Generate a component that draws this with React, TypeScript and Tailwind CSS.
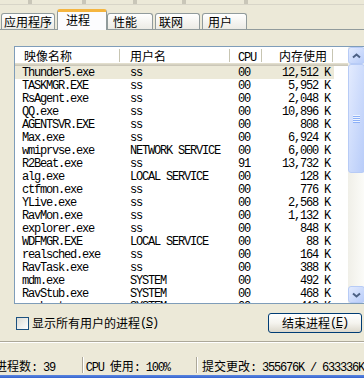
import React from 'react';

const cjk = "font-['Noto_Sans_CJK_SC',sans-serif] text-[12px]";
const mono = "font-['Liberation_Mono',monospace] text-[12px] tracking-[-1.2px]";

// splits a label into CJK and latin runs so each gets its own font
function Txt({ s }: { s: string }) {
  const parts = s.match(/[\u3000-\u9fff\uff00-\uffef]+|[^\u3000-\u9fff\uff00-\uffef]+/g) || [];
  return (
    <>
      {parts.map((p, i) =>
        /[\u3000-\u9fff\uff00-\uffef]/.test(p) ? (
          <span key={i} className={cjk}>{p}</span>
        ) : (
          <span key={i} className={mono}>{p}</span>
        )
      )}
    </>
  );
}

const rows: [string, string, string, string][] = [
  ['Thunder5.exe', 'ss', '00', '12,512 K'],
  ['TASKMGR.EXE', 'ss', '00', '5,952 K'],
  ['RsAgent.exe', 'ss', '00', '2,048 K'],
  ['QQ.exe', 'ss', '00', '10,896 K'],
  ['AGENTSVR.EXE', 'ss', '00', '808 K'],
  ['Max.exe', 'ss', '00', '6,924 K'],
  ['wmiprvse.exe', 'NETWORK SERVICE', '00', '6,000 K'],
  ['R2Beat.exe', 'ss', '91', '13,732 K'],
  ['alg.exe', 'LOCAL SERVICE', '00', '128 K'],
  ['ctfmon.exe', 'ss', '00', '776 K'],
  ['YLive.exe', 'ss', '00', '2,568 K'],
  ['RavMon.exe', 'ss', '00', '1,132 K'],
  ['explorer.exe', 'ss', '00', '848 K'],
  ['WDFMGR.EXE', 'LOCAL SERVICE', '00', '88 K'],
  ['realsched.exe', 'ss', '00', '164 K'],
  ['RavTask.exe', 'ss', '00', '388 K'],
  ['mdm.exe', 'SYSTEM', '00', '492 K'],
  ['RavStub.exe', 'SYSTEM', '00', '468 K'],
  ['svchost.exe', 'SYSTEM', '00', '412 K'],
];

function Divider() {
  return <div className="w-[2px] h-[13px] border-l border-[#c7c5b2] border-r border-r-white" />;
}

function Arrow({ down }: { down?: boolean }) {
  return (
    <svg width="9" height="6" viewBox="0 0 9 6">
      <path d={down ? 'M1 1.5 L4.5 4.5 L8 1.5' : 'M1 4.5 L4.5 1.5 L8 4.5'} fill="none" stroke="#4d6185" strokeWidth="2" />
    </svg>
  );
}

const scrollPart =
  'rounded-[3px] border border-[#b7cbf6] bg-gradient-to-br from-[#e3ebfe] to-[#b8ccf9] flex items-center justify-center';

export default function App() {
  return (
    <div className="w-[364px] h-[378px] overflow-hidden bg-[#ece9d8] flex flex-col text-black leading-none whitespace-pre">
      {/* leftovers of the bar above */}
      <div className="h-[9px] flex flex-col">
        <div className="h-[4px] flex">
          <div className="ml-[28px] w-[4px] bg-[#c9c6b8]" />
          <div className="ml-[50px] w-[4px] bg-[#c9c6b8]" />
          <div className="ml-[47px] w-[4px] bg-[#c9c6b8]" />
          <div className="ml-[45px] w-[4px] bg-[#c9c6b8]" />
          <div className="ml-[58px] w-[4px] bg-[#c9c6b8]" />
        </div>
        <div className="h-[1px] bg-[#d8d5c8]" />
      </div>

      {/* tabs */}
      <div className="h-[21px] flex items-end border-b border-[#919b9c]">
        <div className="ml-[1px] w-[54px] h-[16px] pl-[2px] flex items-center rounded-t-[3px] border border-b-0 border-[#919b9c] bg-gradient-to-b from-white to-[#ecebe5]">
          <Txt s="应用程序" />
        </div>
        <div className="ml-[2px] w-[50px] h-[21px] -mb-[1px] pl-[8px] pb-[2px] flex items-center rounded-t-[3px] border-x border-[#919b9c] border-t-[3px] border-t-[#f5b53f] bg-[#fcfcfe]">
          <Txt s="进程" />
        </div>
        <div className="w-[46px] h-[16px] pl-[5px] flex items-center rounded-t-[3px] border border-b-0 border-[#919b9c] bg-gradient-to-b from-white to-[#ecebe5]">
          <Txt s="性能" />
        </div>
        <div className="ml-[2px] w-[45px] h-[16px] pl-[3px] flex items-center rounded-t-[3px] border border-b-0 border-[#919b9c] bg-gradient-to-b from-white to-[#ecebe5]">
          <Txt s="联网" />
        </div>
        <div className="ml-[2px] w-[45px] h-[16px] pl-[5px] flex items-center rounded-t-[3px] border border-b-0 border-[#919b9c] bg-gradient-to-b from-white to-[#ecebe5]">
          <Txt s="用户" />
        </div>
      </div>

      {/* process list */}
      <div className="ml-[14px] mt-[16px] w-[352px] h-[258px] shrink-0 border border-[#7f9db9] bg-white flex overflow-hidden">
        <div className="w-[333px] flex flex-col overflow-hidden">
          <div className="h-[19px] shrink-0 flex pb-[3px] bg-white shadow-[inset_0_-1px_#cbc7b8,inset_0_-2px_#d6d2c2,inset_0_-3px_#e2decd]">
            <div className="w-[106px] flex items-center">
              <div className="flex-1 pl-[9px]"><Txt s="映像名称" /></div>
              <Divider />
            </div>
            <div className="w-[110px] flex items-center">
              <div className="flex-1 pl-[9px]"><Txt s="用户名" /></div>
              <Divider />
            </div>
            <div className="w-[32px] flex items-center">
              <div className="flex-1 pl-[7px]"><Txt s="CPU" /></div>
              <Divider />
            </div>
            <div className="w-[71px] flex items-center">
              <div className="flex-1 text-right pr-[5px]"><Txt s="内存使用" /></div>
              <Divider />
            </div>
          </div>

          {rows.map((r, i) => (
            <div key={i} className="h-[13px] shrink-0 flex">
              <div className={`w-[319px] flex items-center ${i === 0 ? 'bg-[#ece9d8]' : ''}`}>
                <div className={`w-[106px] pl-[7px] ${mono}`}>{r[0]}</div>
                <div className={`w-[110px] pl-[9px] ${mono}`}>{r[1]}</div>
                <div className={`w-[32px] pl-[7px] ${mono}`}>{r[2]}</div>
                <div className={`w-[71px] pr-[4px] text-right ${mono}`}>{r[3]}</div>
              </div>
            </div>
          ))}
        </div>

        {/* scrollbar */}
        <div className="w-[17px] flex flex-col bg-gradient-to-r from-[#f0efe8] to-[#fcfcf9]">
          <div className={`h-[17px] ${scrollPart}`}>
            <Arrow />
          </div>
          <div className={`h-[109px] flex-col gap-[1px] ${scrollPart}`}>
            {[0, 1, 2, 3].map(k => (
              <div key={k} className="w-[7px] h-[1px] bg-[#eef4fe] shadow-[0_1px_#8cb0f8]" />
            ))}
          </div>
          <div className="flex-1" />
          <div className={`h-[17px] ${scrollPart}`}>
            <Arrow down />
          </div>
        </div>
      </div>

      {/* checkbox and end-process button */}
      <div className="mt-[9px] h-[20px] shrink-0 flex items-center justify-between">
        <div className="flex items-center pl-[16px]">
          <div className="w-[13px] h-[13px] border border-[#1c5180] bg-gradient-to-br from-[#dcdcd5] to-white" />
          <div className="ml-[3px] flex items-center">
            <Txt s="显示所有用户的进程" />
            <span className={mono}>(<span className="underline">S</span>)</span>
          </div>
        </div>
        <div className="mr-[2px] w-[94px] h-[20px] rounded-[3px] border border-[#003c74] bg-gradient-to-b from-white via-[#f5f4ef] to-[#dcd8cc] flex items-center justify-center">
          <Txt s="结束进程" />
          <span className={mono}>(<span className="underline">E</span>)</span>
        </div>
      </div>

      <div className="mt-[8px] h-[1px] shrink-0 bg-[#aca899]" />
      <div className="h-[1px] shrink-0 bg-white" />

      {/* status bar */}
      <div className="mt-[12px] h-[20px] shrink-0 flex items-center">
        <div className="w-[86px] overflow-hidden">
          <div className="-ml-[5px]"><Txt s="进程数: 39" /></div>
        </div>
        <div className="w-[2px] h-[16px] border-l border-[#aca899] border-r border-r-white" />
        <div className="w-[118px] pl-[2px]"><Txt s="CPU 使用: 100%" /></div>
        <div className="w-[2px] h-[16px] border-l border-[#aca899] border-r border-r-white" />
        <div className="pl-[4px]"><Txt s="提交更改: 355676K / 633336K" /></div>
      </div>

      <div className="flex-1 bg-gradient-to-b from-[#5b86e0] to-[#3564cf]" />
    </div>
  );
}
